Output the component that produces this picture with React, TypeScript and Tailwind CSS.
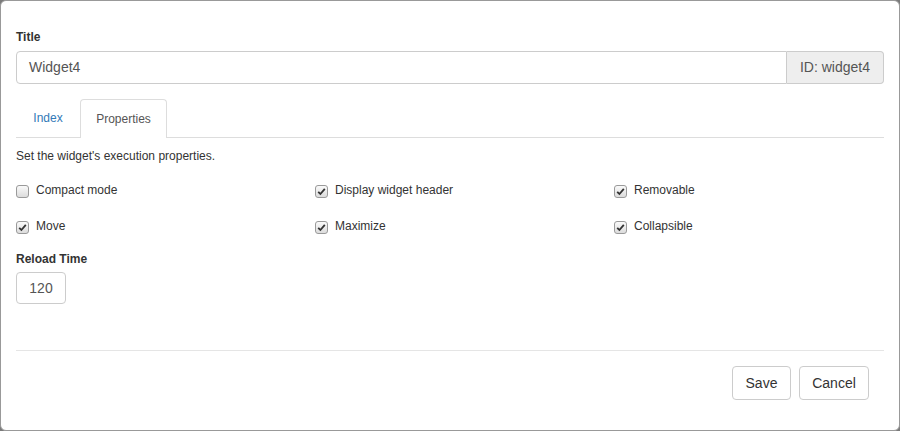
import React from 'react'

function Check({ checked, label }: { checked: boolean; label: string }) {
  return (
    <div className="flex items-start">
      <span className="mt-[4px] flex h-[13px] w-[13px] items-center justify-center rounded-[3px] border border-[#9a9a9a] bg-gradient-to-b from-[#fafafa] to-[#dcdcdc]">
        {checked && (
          <svg width="9" height="9" viewBox="0 0 9 9">
            <path d="M1.2 4.8 L3.4 7 L7.8 1.8" fill="none" stroke="#333" strokeWidth="1.8" />
          </svg>
        )}
      </span>
      <span className="ml-[7px]">{label}</span>
    </div>
  )
}

export default function App() {
  const checks = [
    { label: 'Compact mode', checked: false },
    { label: 'Display widget header', checked: true },
    { label: 'Removable', checked: true },
    { label: 'Move', checked: true },
    { label: 'Maximize', checked: true },
    { label: 'Collapsible', checked: true },
  ]

  return (
    <div className="h-[431px] w-[900px] bg-[#7b7b7b] font-['Liberation_Sans',Arial,sans-serif] text-[12px] text-[#333]">
      <div className="h-full w-full rounded-[6px] border border-[#999] bg-white">
        {/* body */}
        <div className="px-[15px] pt-[27px]">
          <div className="mb-[5px] font-bold">Title</div>
          <div className="flex h-[33px] text-[14px]">
            <div className="flex flex-1 items-center rounded-l-[4px] border border-[#ccc] px-[12px] text-[#555]">Widget4</div>
            <div className="flex w-[97px] items-center justify-center rounded-r-[4px] border border-l-0 border-[#ccc] bg-[#eee] text-[#555]">
              ID: widget4
            </div>
          </div>

          {/* tabs */}
          <div className="mt-[15px] flex h-[39px] border-b border-[#ddd] text-[12px]">
            <div className="flex w-[64px] items-center justify-center text-[#337ab7]">Index</div>
            <div className="mb-[-1px] flex w-[87px] items-center justify-center rounded-t-[4px] border border-b-0 border-[#ddd] bg-white text-[#555]">
              Properties
            </div>
          </div>

          <div className="mt-[9px]">Set the widget's execution properties.</div>

          <div className="mt-[16px] grid grid-cols-[299px_299px_1fr] gap-y-[18px]">
            {checks.map(c => (
              <Check key={c.label} label={c.label} checked={c.checked} />
            ))}
          </div>

          <div className="mt-[15px] font-bold">Reload Time</div>
          <div className="mt-[4px] flex h-[32px] w-[50px] items-center justify-center rounded-[4px] border border-[#ccc] text-[14px] text-[#555]">
            120
          </div>

          <div className="mt-[46px] border-t border-[#e5e5e5]" />
        </div>

        {/* footer */}
        <div className="flex justify-end gap-[8px] pr-[30px] pt-[15px] text-[14px]">
          <div className="flex h-[34px] w-[59px] items-center justify-center rounded-[4px] border border-[#ccc]">Save</div>
          <div className="flex h-[34px] w-[70px] items-center justify-center rounded-[4px] border border-[#ccc]">Cancel</div>
        </div>
      </div>
    </div>
  )
}
